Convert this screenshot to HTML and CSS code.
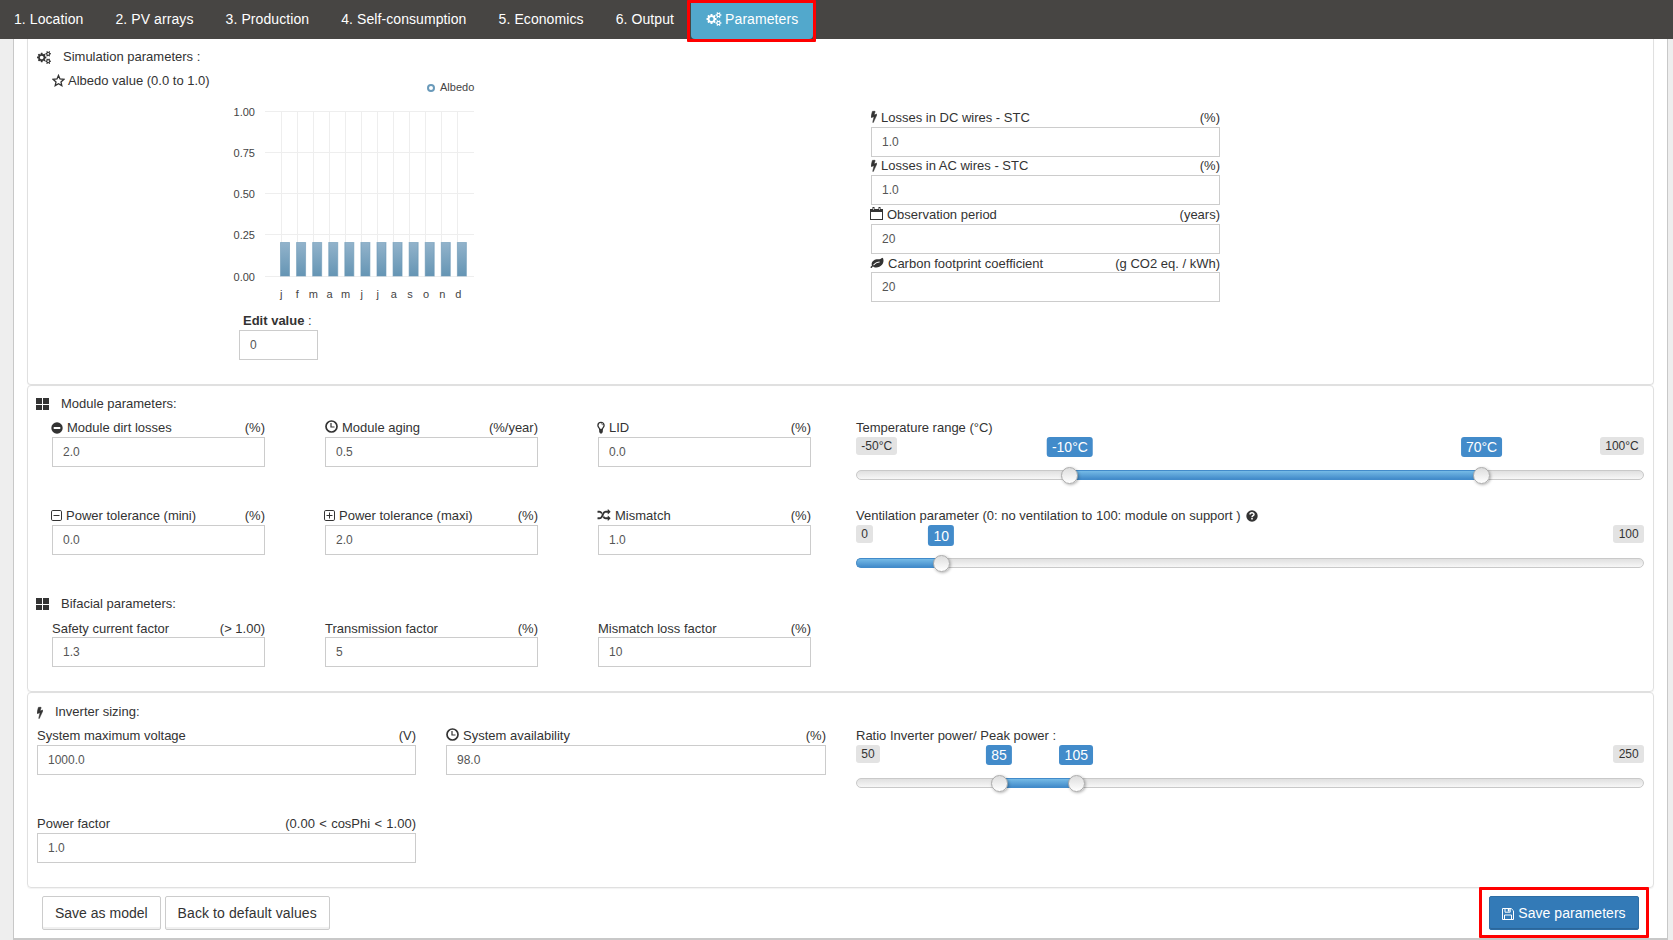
FILE: index.html
```html
<!DOCTYPE html>
<html lang="en">
  <head>
    <meta charset="UTF-8" />
    <meta name="viewport" content="width=device-width, initial-scale=1.0" />
    <title>Parameters</title>
    <link rel="stylesheet" href="styles.css">
  </head>
  <body>
    <!-- shared icons -->
    <svg class="defs" width="0" height="0">
      <symbol id="cogs" viewBox="0 0 1920 1792">
        <path d="M896 896q0-106-75-181t-181-75-181 75-75 181 75 181 181 75 181-75 75-181zm768 512q0-52-38-90t-90-38-90 38-38 90q0 53 37.500 90.500t90.500 37.500 90.500-37.500 37.500-90.500zm0-1024q0-52-38-90t-90-38-90 38-38 90q0 53 37.500 90.500t90.500 37.500 90.500-37.500 37.500-90.500zm-384 421v185q0 10-7 19.500t-16 10.500l-155 24q-11 35-32 76 34 48 90 115 7 11 7 20 0 12-7 19-23 30-82.500 89.500t-78.500 59.500q-11 0-21-7l-115-90q-37 19-77 31-11 108-23 155-7 24-30 24h-186q-11 0-20-7.500t-10-17.500l-23-153q-34-10-75-31l-118 89q-7 7-20 7-11 0-21-8-144-133-144-160 0-9 7-19 10-14 41-53t47-61q-23-44-35-82l-152-24q-10-1-17-9.500t-7-19.500v-185q0-10 7-19.500t16-10.500l155-24q11-35 32-76-34-48-90-115-7-11-7-20 0-12 7-20 22-30 82-89t79-59q11 0 21 7l115 90q34-18 77-32 11-108 23-154 7-24 30-24h186q11 0 20 7.500t10 17.500l23 153q34 10 75 31l118-89q8-7 20-7 11 0 21 8 144 133 144 160 0 8-7 19-12 16-42 54t-45 60q23 48 34 82l152 23q10 2 17 10.500t7 19.500zm640 533v140q0 16-149 31-12 27-30 52 51 113 51 138 0 4-4 7-122 71-124 71-8 0-46-47t-52-68q-20 2-30 2t-30-2q-14 21-52 68t-46 47q-2 0-124-71-4-3-4-7 0-25 51-138-18-25-30-52-149-15-149-31v-140q0-16 149-31 13-29 30-52-51-113-51-138 0-4 4-7 4-2 35-20t59-34 30-16q8 0 46 46.500t52 67.500q20-2 30-2t30 2q51-71 92-112l6-2q4 0 124 70 4 3 4 7 0 25-51 138 17 23 30 52 149 15 149 31zm0-1024v140q0 16-149 31-12 27-30 52 51 113 51 138 0 4-4 7-122 71-124 71-8 0-46-47t-52-68q-20 2-30 2t-30-2q-14 21-52 68t-46 47q-2 0-124-71-4-3-4-7 0-25 51-138-18-25-30-52-149-15-149-31v-140q0-16 149-31 13-29 30-52-51-113-51-138 0-4 4-7 4-2 35-20t59-34 30-16q8 0 46 46.500t52 67.500q20-2 30-2t30 2q51-71 92-112l6-2q4 0 124 70 4 3 4 7 0 25-51 138 17 23 30 52 149 15 149 31z" />
      </symbol>
      <symbol id="bolt" viewBox="448 0 896 1792">
        <path d="M1333 566q18 20 7 44l-540 1157q-13 25-42 25-4 0-14-2-17-5-25.500-19t-4.500-30l197-808-406 101q-4 1-12 1-18 0-31-11-18-15-13-39l201-825q4-14 16-23t28-9h328q19 0 32 12.500t13 29.500q0 8-5 18l-171 463 396-98q8-2 12-2 19 0 34 15z" stroke="currentColor" stroke-width="90" />
      </symbol>
      <symbol id="leaf" viewBox="0 0 1792 1792">
        <path d="M1280 832q0-26-19-45t-45-19q-172 0-318 49.500t-259.500 134-235.500 219.500q-19 21-19 45 0 26 19 45t45 19q24 0 45-19 27-24 74-71t67-66q137-124 268.500-176t313.500-52q26 0 45-19t19-45zm512-198q0 95-20 193-46 224-184.500 383t-357.500 268q-214 108-438 108-148 0-286-47-15-5-88-42t-96-37q-16 0-39.500 32t-45 70-52.500 70-60 32q-43 0-63.500-17.500t-45.500-59.500q-2-4-6-11t-5.500-10-3-9.500-1.500-13.500q0-35 31-73.500t68-65.500 68-56 31-48q0-4-14-38t-16-44q-9-51-9-104 0-115 43.500-220t119-184.500 170.500-139 204-95.500q55-18 145-25.500t179.500-9 178.500-6 163.500-24 113.500-56.500l29.500-29.500 29.500-28 27-20 36.500-16 43.500-4.500q39 0 70.500 46t47.500 112 24 124 8 96z" />
      </symbol>
      <symbol id="random" viewBox="0 0 1792 1792">
        <path d="M666 481q-60 92-137 273-22-45-37-72.500t-40.500-63.500-51-56.500-63-35-81.500-14.500h-224q-14 0-23-9t-9-23v-192q0-14 9-23t23-9h224q250 0 410 225zm1126 799q0 14-9 23l-320 320q-9 9-23 9-13 0-22.500-9.500t-9.500-22.500v-192q-32 0-85 .5t-81 1-73-1-71-5-64-10.500-63-18.500-58-28.500-59-40-55-53.500-56-69.500q59-93 136-273 22 45 37 72.500t40.500 63.500 51 56.500 63 35 81.500 14.500h256v-192q0-14 9-23t23-9q12 0 24 10l319 319q9 9 9 23zm0-896q0 14-9 23l-320 320q-9 9-23 9-13 0-22.500-9.500t-9.500-22.500v-192h-256q-48 0-87 15t-69 45-51 61.500-45 77.500q-32 62-78 171-29 66-49.500 111t-54 105-64 100-74 83-90 68.500-106.500 42-128 16.500h-224q-14 0-23-9t-9-23v-192q0-14 9-23t23-9h224q48 0 87-15t69-45 51-61.500 45-77.500q32-62 78-171 29-66 49.500-111t54-105 64-100 74-83 90-68.500 106.500-42 128-16.500h256v-192q0-14 9-23t23-9q12 0 24 10l319 319q9 9 9 23z" />
      </symbol>
      <symbol id="star" viewBox="0 0 13 13">
        <path d="M6.500 1.400L8 4.900l3.900.4-2.900 2.600.8 3.700-3.300-1.900-3.300 1.900.8-3.700L1.100 5.300 5 4.900z" fill="none" stroke="currentColor" stroke-width="1.300" />
      </symbol>
      <symbol id="calendar" viewBox="0 0 13 13">
        <path d="M0 2h13v11H0zM1 5v7h11V5z" fill-rule="evenodd" />
        <path d="M2.500 0h2v3.500h-2zM8.500 0h2v3.500h-2z" />
        <path d="M3.200 1h.6v2h-.6zM9.200 1h.6v2h-.6z" fill="#fff" />
      </symbol>
      <symbol id="large" viewBox="0 0 13 13">
        <path d="M0 0h6v6H0zM7 0h6v6H7zM0 7h6v5H0zM7 7h6v5H7z" />
      </symbol>
      <symbol id="minus" viewBox="0 0 12 12">
        <circle cx="6" cy="6" r="5.700" />
        <path d="M2.700 5h6.600v2H2.700z" fill="#fff" />
      </symbol>
      <symbol id="clock" viewBox="0 0 13 13">
        <circle cx="6.500" cy="6.500" r="5.500" fill="none" stroke="currentColor" stroke-width="1.700" />
        <path d="M6 3v4h3.500" fill="none" stroke="currentColor" stroke-width="1.200" />
      </symbol>
      <symbol id="bulb" viewBox="0 0 8 12">
        <path d="M2.700 8C2.600 6.400.9 5.800.9 3.900a3.100 3.100 0 016.200 0c0 1.900-1.700 2.500-1.800 4.100z" fill="none" stroke="currentColor" stroke-width="1.300" />
        <path d="M2.200 7.500h3.600v3L4.800 12H3.200l-1-1.500z" />
        <path d="M4 2.200c.9 0 1.600.6 1.600 1.500" fill="none" stroke="currentColor" stroke-width=".7" />
      </symbol>
      <symbol id="minus-sq" viewBox="0 0 11 11">
        <rect x=".5" y=".5" width="10" height="10" rx="1.300" fill="none" stroke="currentColor" />
        <path d="M2.500 5.500h6" stroke="currentColor" />
      </symbol>
      <symbol id="plus-sq" viewBox="0 0 11 11">
        <rect x=".5" y=".5" width="10" height="10" rx="1.300" fill="none" stroke="currentColor" />
        <path d="M2.500 5.500h6M5.500 2.500v6" stroke="currentColor" />
      </symbol>
      <symbol id="question" viewBox="0 0 12 12">
        <circle cx="6" cy="6" r="5.700" />
        <path d="M4 4.600C4 2.300 8 2.300 8 4.500 8 5.800 6 5.700 6 7.300" fill="none" stroke="#fff" stroke-width="1.500" />
        <path d="M5.200 8h1.600v1.500H5.200z" fill="#fff" />
      </symbol>
      <symbol id="save" viewBox="0 0 12 12">
        <path d="M.5.500h8.700l2.300 2.300v8.700H.5zM2.500 11.500v-4.500h7v4.500M3 .5v3.700h5.200V.5" fill="none" stroke="currentColor" />
        <path d="M5.800.5h1.700v3H5.800z" />
      </symbol>
    </svg>

    <ul class="navbar">
      <li>1. Location</li>
      <li>2. PV arrays</li>
      <li>3. Production</li>
      <li>4. Self-consumption</li>
      <li>5. Economics</li>
      <li>6. Output</li>
      <li class="active"><svg class="icon w15"><use href="#cogs" /></svg>Parameters</li>
    </ul>

    <div class="container">
      <div class="panel simulation">
        <div class="title"><svg class="icon w14"><use href="#cogs" /></svg>Simulation parameters :</div>
        <div class="sim_row">
          <div class="albedo_label"><svg class="icon w13"><use href="#star" /></svg>Albedo value (0.0 to 1.0)</div>
          <div class="albedo">
            <svg class="chart" width="248" height="239">
              <defs>
                <linearGradient id="barFill" x1="0" y1="0" x2="0" y2="1">
                  <stop offset="0" stop-color="#92b3cb" />
                  <stop offset="1" stop-color="#6595b4" />
                </linearGradient>
              </defs>
              <circle cx="199" cy="16" r="3" fill="none" stroke="#6a9aba" stroke-width="2" />
              <text x="208" y="19">Albedo</text>
              <g id="grid"></g>
            </svg>
            <div class="edit">
              <label><b>Edit value</b>&nbsp;:</label>
              <input type="text" value="0" />
            </div>
          </div>
          <div class="losses">
            <div class="field">
              <label><svg class="icon w7"><use href="#bolt" /></svg>Losses in DC wires - STC<span>(%)</span></label>
              <input type="text" value="1.0" />
            </div>
            <div class="field">
              <label><svg class="icon w7"><use href="#bolt" /></svg>Losses in AC wires - STC<span>(%)</span></label>
              <input type="text" value="1.0" />
            </div>
            <div class="field">
              <label><svg class="icon w13"><use href="#calendar" /></svg>Observation period<span>(years)</span></label>
              <input type="text" value="20" />
            </div>
            <div class="field">
              <label><svg class="icon w14"><use href="#leaf" /></svg>Carbon footprint coefficient<span>(g CO2 eq. / kWh)</span></label>
              <input type="text" value="20" />
            </div>
          </div>
        </div>
      </div>

      <div class="panel module">
        <div class="title"><svg class="icon w13"><use href="#large" /></svg>Module parameters:</div>
        <div class="row">
          <div class="field">
            <label><svg class="icon w12"><use href="#minus" /></svg>Module dirt losses<span>(%)</span></label>
            <input type="text" value="2.0" />
          </div>
          <div class="field">
            <label><svg class="icon clock"><use href="#clock" /></svg>Module aging<span>(%/year)</span></label>
            <input type="text" value="0.5" />
          </div>
          <div class="field">
            <label><svg class="icon w8"><use href="#bulb" /></svg>LID<span>(%)</span></label>
            <input type="text" value="0.0" />
          </div>
          <div class="range">
            <label>Temperature range (°C)</label>
            <div class="slider">
              <div class="limits"><span>-50°C</span><span>100°C</span></div>
              <div class="track"></div>
              <div class="rail">
                <div class="bar" style="left: 26.67%; width: 53.33%"></div>
                <div class="value" style="left: 26.67%">-10°C</div>
                <div class="value" style="left: 80%">70°C</div>
                <div class="handle" style="left: 26.67%"></div>
                <div class="handle" style="left: 80%"></div>
              </div>
            </div>
          </div>
        </div>
        <div class="row">
          <div class="field">
            <label><svg class="icon w11"><use href="#minus-sq" /></svg>Power tolerance (mini)<span>(%)</span></label>
            <input type="text" value="0.0" />
          </div>
          <div class="field">
            <label><svg class="icon w11"><use href="#plus-sq" /></svg>Power tolerance (maxi)<span>(%)</span></label>
            <input type="text" value="2.0" />
          </div>
          <div class="field">
            <label><svg class="icon w14"><use href="#random" /></svg>Mismatch<span>(%)</span></label>
            <input type="text" value="1.0" />
          </div>
          <div class="range">
            <label>Ventilation parameter (0: no ventilation to 100: module on support )<svg class="icon w12 help"><use href="#question" /></svg></label>
            <div class="slider">
              <div class="limits"><span>0</span><span>100</span></div>
              <div class="track"></div>
              <div class="rail">
                <div class="bar from_start" style="width: 10%"></div>
                <div class="value single" style="left: 10%">10</div>
                <div class="handle" style="left: 10%"></div>
              </div>
            </div>
          </div>
        </div>
        <div class="title second"><svg class="icon w13"><use href="#large" /></svg>Bifacial parameters:</div>
        <div class="row bifacial">
          <div class="field">
            <label>Safety current factor<span>(&gt; 1.00)</span></label>
            <input type="text" value="1.3" />
          </div>
          <div class="field">
            <label>Transmission factor<span>(%)</span></label>
            <input type="text" value="5" />
          </div>
          <div class="field">
            <label>Mismatch loss factor<span>(%)</span></label>
            <input type="text" value="10" />
          </div>
        </div>
      </div>

      <div class="panel inverter">
        <div class="title"><svg class="icon w7"><use href="#bolt" /></svg>Inverter sizing:</div>
        <div class="row">
          <div class="field">
            <label>System maximum voltage<span>(V)</span></label>
            <input type="text" value="1000.0" />
          </div>
          <div class="field wide">
            <label><svg class="icon clock"><use href="#clock" /></svg>System availability<span>(%)</span></label>
            <input type="text" value="98.0" />
          </div>
          <div class="range">
            <label>Ratio Inverter power/ Peak power :</label>
            <div class="slider">
              <div class="limits"><span>50</span><span>250</span></div>
              <div class="track"></div>
              <div class="rail">
                <div class="bar" style="left: 17.5%; width: 10%"></div>
                <div class="value" style="left: 17.5%">85</div>
                <div class="value" style="left: 27.5%">105</div>
                <div class="handle" style="left: 17.5%"></div>
                <div class="handle" style="left: 27.5%"></div>
              </div>
            </div>
          </div>
        </div>
        <div class="row">
          <div class="field">
            <label>Power factor<span class="hint">(0.00 &lt; cosPhi &lt; 1.00)</span></label>
            <input type="text" value="1.0" />
          </div>
        </div>
      </div>

      <div class="footer">
        <button class="btn">Save as model</button>
        <button class="btn btn_default">Back to default values</button>
        <button class="btn btn_primary"><svg class="icon w12"><use href="#save" /></svg>Save parameters</button>
      </div>
    </div>

    <script>
      const grid = document.querySelector("#grid");
      const months = ["j", "f", "m", "a", "m", "j", "j", "a", "s", "o", "n", "d"];
      const ticks = ["1.00", "0.75", "0.50", "0.25", "0.00"];
      const lines = [39.5, 80.5, 121.5, 162.5, 204.5];
      let html = "";

      ticks.forEach((tick, i) => {
        html += `<line x1="33" x2="242" y1="${lines[i]}" y2="${lines[i]}" />`;
        html += `<text class="end" x="23" y="${lines[i] + 4.5}">${tick}</text>`;
      });
      months.forEach((month, i) => {
        const x = 49.5 + i * 16;
        html += `<line x1="${x}" x2="${x}" y1="39" y2="204" />`;
        html += `<text class="middle" x="${49.2 + i * 16.1}" y="226">${month}</text>`;
      });
      // bars are slightly wider spaced than the grid lines
      months.forEach((month, i) => {
        html += `<rect x="${48.5 + i * 16.08}" y="170.5" width="9" height="33.5" />`;
      });
      grid.innerHTML = html;
    </script>
  </body>
</html>
```
FILE: styles.css
```css
* {
  box-sizing: border-box;
}
body {
  margin: 0;
  background-color: #eeeeee;
  font-family: "Liberation Sans", Arial, sans-serif;
  font-size: 13px;
  line-height: 18px;
  color: #333;
}
.defs {
  display: block;
}
.navbar {
  display: flex;
  height: 39px;
  margin: 0;
  padding: 0;
  list-style: none;
  background-color: #474543;
  color: #fff;
  font-size: 14px;
  letter-spacing: 0.08px;
  line-height: 38px;
}
.navbar li {
  margin-right: 2.1px;
  padding: 0 15px;
  white-space: nowrap;
}
.navbar li:first-child {
  padding-left: 14px;
}
.navbar .active {
  position: relative;
  width: 122px;
  background-color: #52a8cc;
  border-radius: 0 0 4px 4px;
}
/* red frames round the highlighted actions */
.navbar .active::after,
.btn_primary::after {
  content: "";
  position: absolute;
  border: 3px solid #f00;
  border-radius: 1px;
}
.navbar .active::after {
  inset: 0 -3px -3px -4px;
}

.icon {
  height: 13px;
  margin-right: 4px;
  fill: currentColor;
  vertical-align: -2px;
  flex: none;
}
.w7 { width: 6px; }
.w8 { width: 8px; }
.w11 { width: 11px; height: 11px; }
.w12 { width: 12px; height: 12px; }
.w13 { width: 13px; }
.w14 { width: 14px; }
.w15 { width: 16px; height: 14px; }
.clock {
  width: 13px;
  margin-bottom: 2px;
}
label .w8,
label .w11,
label .w12,
label .w13,
label .w14 {
  margin-left: -1px;
}
.navbar .icon {
  margin-right: 3px;
}
label .help {
  margin-left: 6px;
}

.container {
  height: 901px;
  margin: 0 5px 0 13px;
  padding: 0 13px;
  background-color: #fff;
  border: 1px solid #c8c8c8;
  border-top: none;
  border-bottom-width: 2px;
}
.panel {
  padding: 9px 9px 0;
  border: 1px solid #e0e0e0;
  border-radius: 4px;
  box-shadow: 0 1px 1px rgba(0, 0, 0, 0.05);
}
.title {
  display: flex;
  align-items: center;
  height: 18px;
  margin-bottom: 5px;
}
.title .icon {
  margin-right: 12px;
}
.title .w13 {
  margin-left: -1px;
}
.simulation {
  height: 346px;
  padding-top: 9px;
  border-top: none;
  border-radius: 0 0 4px 4px;
}
.module {
  height: 307px;
}
.inverter {
  height: 196px;
}

.sim_row {
  display: flex;
  padding-left: 15px;
}
.simulation .title {
  margin-bottom: 6px;
}
.albedo_label {
  width: 180px;
}
.albedo_label .icon {
  margin-right: 3px;
}
.albedo {
  width: 248px;
}
.chart {
  display: block;
}
.chart text {
  font-size: 11px;
  fill: #444;
}
.chart .end {
  text-anchor: end;
}
.chart .middle {
  text-anchor: middle;
}
.chart line {
  stroke: #eee;
}
.chart rect {
  fill: url(#barFill);
  stroke: #6a97b5;
  stroke-opacity: 0.6;
}
.edit {
  width: 79px;
  margin-left: 7px;
}
.edit label {
  padding-left: 4px;
}
.losses {
  width: 349px;
  margin: 36px 0 0 391px;
}
.losses label {
  height: 18.6px;
  padding-top: 1px;
}
.losses .icon {
  margin-bottom: 2px;
}

label {
  display: flex;
  align-items: center;
  height: 19px;
  white-space: nowrap;
}
label span {
  margin-left: auto;
}
.hint {
  word-spacing: 0.7px;
}
input {
  display: block;
  width: 100%;
  height: 30px;
  padding: 5px 10px;
  border: 1px solid #ccc;
  font-family: inherit;
  font-size: 12px;
  line-height: 18px;
  color: #555;
}
.row {
  display: flex;
  height: 88px;
}
.module .row {
  padding-left: 15px;
}
.module .field {
  width: 213px;
  margin-right: 60px;
}
.module .range {
  margin-left: -15px;
}
.second {
  margin-top: 1px;
  margin-bottom: 5px;
}
.bifacial label {
  padding-top: 2px;
}
.inverter {
  padding-top: 10px;
}
.inverter .field {
  width: 379px;
  margin-right: 30px;
}
.inverter .wide {
  width: 380px;
}

.range {
  width: 788px;
}
.slider {
  position: relative;
}
.limits {
  display: flex;
  justify-content: space-between;
  height: 33px;
}
.limits span {
  height: 18px;
  margin: 0;
  padding: 0 5.3px;
  border-radius: 3px;
  background-color: #e3e3e3;
  font-size: 12px;
}
.track {
  height: 10px;
  border: 1px solid #c9c9c9;
  border-radius: 5px;
  background: linear-gradient(#e0e0e0, #f7f7f7);
}
.rail {
  position: absolute;
  inset: 0 8px;
}
.bar {
  position: absolute;
  top: 33px;
  height: 10px;
  border: solid #428bca;
  border-width: 1px 0;
  background: linear-gradient(#75bae6, #428bca);
}
.from_start {
  left: -8px;
  box-sizing: content-box;
  height: 8px;
  padding-left: 8px;
  border-left-width: 1px;
  border-radius: 5px 0 0 5px;
}
.value {
  position: absolute;
  top: 0;
  height: 20px;
  padding: 0 5.3px;
  border-radius: 3px;
  background-color: #428bca;
  color: #fff;
  font-size: 14px;
  line-height: 20px;
  transform: translateX(-50%);
}
.single {
  height: 21px;
  line-height: 22px;
}
.handle {
  position: absolute;
  top: 30px;
  width: 17px;
  height: 17px;
  margin-left: -8.5px;
  border: 1px solid #aaa;
  border-radius: 50%;
  background: linear-gradient(#ddd, #fff);
  box-shadow: 1px 1px 3px rgba(0, 0, 0, 0.3);
}

.footer {
  display: flex;
  gap: 4px;
  padding: 8px 15px 0;
}
.btn {
  height: 34px;
  padding: 0 12px;
  border: 1px solid #ccc;
  border-radius: 2px;
  background-color: #fff;
  box-shadow: inset 0 -2px 0 #f0f0f0;
  font-family: inherit;
  font-size: 14px;
  white-space: nowrap;
  color: #333;
}
.btn_default {
  width: 165px;
  letter-spacing: 0.1px;
}
.btn_primary {
  position: relative;
  width: 150px;
  margin-left: auto;
  border-color: #2e6da4;
  background-color: #337ab7;
  box-shadow: inset 0 -1px 0 #2b669a;
  letter-spacing: 0.05px;
  color: #fff;
}
.btn_primary::after {
  inset: -10px -11px -9px -11px;
}
```
